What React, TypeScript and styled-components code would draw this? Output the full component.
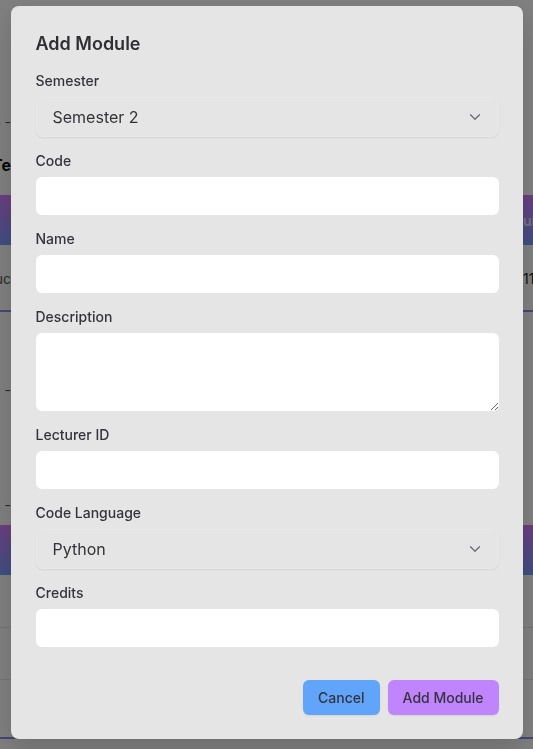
import React from "react";
import styled, { createGlobalStyle } from "styled-components";

const GlobalStyle = createGlobalStyle`
  html, body { margin: 0; padding: 0; background: #ffffff; overflow: hidden; }
  body { font-family: Inter, "Noto Sans", "Liberation Sans", sans-serif; }
  *, *::before, *::after { box-sizing: border-box; }
`;

/* ---------- background page (dimmed by the overlay) ---------- */

const Page = styled.div`
  width: 100%;
  height: 749px;
  overflow: hidden;
  display: flex;
  flex-direction: column;
  background: #ffffff;
`;

const Spacer = styled.div<{ $h: number }>`
  flex: none;
  height: ${(p) => p.$h}px;
`;

const BgRow = styled.div<{ $h: number }>`
  flex: none;
  height: ${(p) => p.$h}px;
  display: grid;
  grid-template-columns: 11px 1fr 10px;
  align-items: center;
  white-space: nowrap;
`;

const BgBand = styled(BgRow)`
  background: linear-gradient(180deg, #d67cff 0%, #7c9eff 100%);
`;

const LeftCell = styled.div<{ $bold?: boolean }>`
  display: flex;
  justify-content: flex-end;
  font-size: ${(p) => (p.$bold ? 16 : 14)}px;
  font-weight: ${(p) => (p.$bold ? 700 : 400)};
  color: ${(p) => (p.$bold ? "#111111" : "#555555")};
`;

const RightCell = styled.div<{ $light?: boolean }>`
  font-size: 14px;
  font-weight: ${(p) => (p.$light ? 600 : 400)};
  color: ${(p) => (p.$light ? "rgba(255,255,255,0.8)" : "#222222")};
`;

const Rule = styled.div<{ $h: number; $color: string }>`
  flex: none;
  height: ${(p) => p.$h}px;
  background: ${(p) => p.$color};
`;

/* ---------- modal ---------- */

const Overlay = styled.div`
  position: fixed;
  inset: 0;
  background: rgba(0, 0, 0, 0.5);
  display: flex;
  justify-content: center;
  align-items: flex-start;
  padding-top: 6px;
`;

const Modal = styled.div`
  width: 512px;
  background: #e5e5e5;
  border-radius: 8px;
  padding: 24px 24px 24px 25px;
  box-shadow: 0 10px 25px rgba(0, 0, 0, 0.15);
  color: #36363c;
`;

const Title = styled.h2`
  margin: 0 0 13px;
  font-size: 18px;
  line-height: 28px;
  font-weight: 600;
  color: #2e2e33;
`;

const Field = styled.div`
  margin-bottom: 14px;
`;

const Label = styled.label`
  display: block;
  font-size: 14px;
  line-height: 20px;
  font-weight: 500;
  color: #34343a;
  margin-bottom: 6px;
`;

const TextInput = styled.input`
  display: block;
  width: 100%;
  height: 38px;
  border: none;
  border-radius: 6px;
  background: #ffffff;
  padding: 0 12px;
  font: inherit;
  font-size: 16px;
  outline: none;
`;

const TextArea = styled.textarea`
  display: block;
  width: 100%;
  height: 78px;
  border: none;
  border-radius: 6px;
  background: #ffffff;
  padding: 8px 12px;
  font: inherit;
  font-size: 16px;
  resize: vertical;
  outline: none;
`;

const SelectWrap = styled.div`
  position: relative;
`;

const Select = styled.select`
  display: block;
  width: 100%;
  height: 40px;
  appearance: none;
  -webkit-appearance: none;
  border: 1px solid #e9e9e9;
  border-radius: 7px;
  background: #e5e5e5;
  box-shadow: 0 1px 2px rgba(0, 0, 0, 0.07);
  padding: 0 40px 0 16px;
  font-family: inherit;
  font-size: 16px;
  line-height: 24px;
  color: #333338;
  outline: none;
`;

const Chevron = styled.svg`
  position: absolute;
  right: 15px;
  top: 50%;
  width: 18px;
  height: 18px;
  margin-top: -9px;
  pointer-events: none;
`;

const Footer = styled.div`
  display: flex;
  justify-content: flex-end;
  gap: 8px;
  margin-top: 33px;
`;

const Button = styled.button<{ $variant: "cancel" | "primary" }>`
  height: 35px;
  padding: 0 15px;
  border: none;
  border-radius: 6px;
  background: ${(p) => (p.$variant === "cancel" ? "#60a5fa" : "#c084fc")};
  box-shadow: 0 1px 2px rgba(0, 0, 0, 0.08);
  font-family: inherit;
  font-size: 14px;
  font-weight: 500;
  color: #34343c;
  cursor: pointer;
`;

const ChevronDown = () => (
  <Chevron viewBox="0 0 24 24" fill="none" stroke="#6b6b73" strokeWidth={1.7} strokeLinecap="round" strokeLinejoin="round">
    <path d="m6 9 6 6 6-6" />
  </Chevron>
);

export default function App() {
  return (
    <>
      <GlobalStyle />
      <Page>
        <Spacer $h={112} />
        <BgRow $h={20}>
          <LeftCell>Week 6 -</LeftCell>
          <div />
          <RightCell />
        </BgRow>
        <Spacer $h={23} />
        <BgRow $h={20}>
          <LeftCell $bold>Te</LeftCell>
          <div />
          <RightCell />
        </BgRow>
        <Spacer $h={20} />
        <BgBand $h={50}>
          <LeftCell />
          <div />
          <RightCell $light>urses</RightCell>
        </BgBand>
        <Spacer $h={23} />
        <BgRow $h={20}>
          <LeftCell>Introduc</LeftCell>
          <div />
          <RightCell>11</RightCell>
        </BgRow>
        <Spacer $h={22} />
        <Rule $h={2} $color="#8b8cf0" />
        <Spacer $h={68} />
        <BgRow $h={20}>
          <LeftCell>Week 1 -</LeftCell>
          <div />
          <RightCell />
        </BgRow>
        <Spacer $h={95} />
        <BgRow $h={20}>
          <LeftCell>Week 3 -</LeftCell>
          <div />
          <RightCell />
        </BgRow>
        <Spacer $h={10} />
        <BgBand $h={50}>
          <LeftCell />
          <div />
          <RightCell />
        </BgBand>
        <Spacer $h={52} />
        <Rule $h={1} $color="#e5e7eb" />
        <Spacer $h={51} />
        <Rule $h={1} $color="#e5e7eb" />
        <Spacer $h={57} />
        <Rule $h={2} $color="#8b8cf0" />
      </Page>

      <Overlay>
        <Modal>
          <Title>Add Module</Title>

          <Field>
            <Label>Semester</Label>
            <SelectWrap>
              <Select defaultValue="2">
                <option value="1">Semester 1</option>
                <option value="2">Semester 2</option>
              </Select>
              <ChevronDown />
            </SelectWrap>
          </Field>

          <Field>
            <Label>Code</Label>
            <TextInput type="text" />
          </Field>

          <Field>
            <Label>Name</Label>
            <TextInput type="text" />
          </Field>

          <Field>
            <Label>Description</Label>
            <TextArea />
          </Field>

          <Field>
            <Label>Lecturer ID</Label>
            <TextInput type="text" />
          </Field>

          <Field>
            <Label>Code Language</Label>
            <SelectWrap>
              <Select defaultValue="python">
                <option value="python">Python</option>
                <option value="java">Java</option>
              </Select>
              <ChevronDown />
            </SelectWrap>
          </Field>

          <Field>
            <Label>Credits</Label>
            <TextInput type="number" />
          </Field>

          <Footer>
            <Button $variant="cancel">Cancel</Button>
            <Button $variant="primary">Add Module</Button>
          </Footer>
        </Modal>
      </Overlay>
    </>
  );
}
